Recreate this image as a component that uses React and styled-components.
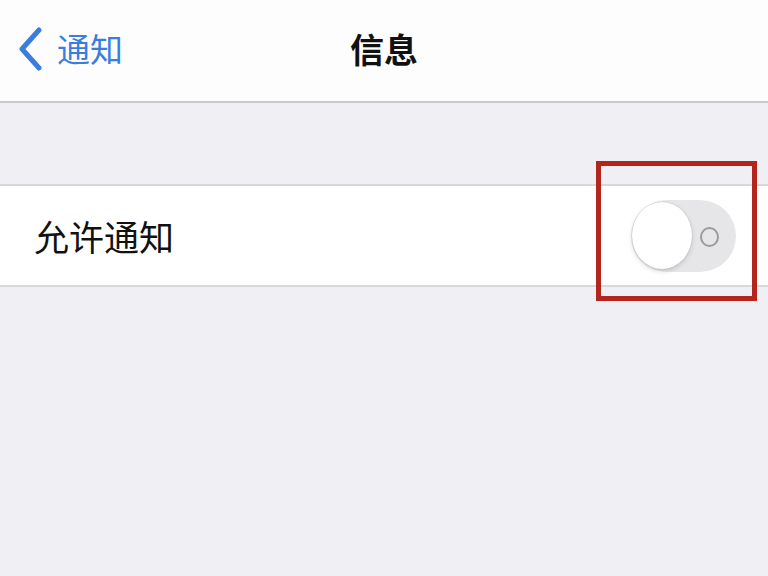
import React from "react";
import styled, { createGlobalStyle } from "styled-components";

const Global = createGlobalStyle`
  html, body { margin: 0; padding: 0; background: #efeff4; }
  body { font-family: "PingFang SC", "Noto Sans CJK SC", "Noto Sans", sans-serif; }
  #root { min-height: 576px; }
`;

const Page = styled.div`
  width: 768px;
  height: 576px;
  background: #efeff4;
  display: flex;
  flex-direction: column;
  overflow: hidden;
`;

const NavBar = styled.header`
  height: 103px;
  background: #fdfdfe;
  border-bottom: 2px solid #c9c9cc;
  display: grid;
  grid-template-columns: 1fr auto 1fr;
  align-items: center;
  box-sizing: border-box;
  flex: none;
`;

const Back = styled.div`
  display: flex;
  align-items: center;
  gap: 14px;
  padding-left: 17px;
  color: #3b7ddd;
  font-size: 33px;
  line-height: 1;
  padding-bottom: 4px;
`;

const Title = styled.h1`
  margin: 0;
  font-size: 34px;
  font-weight: 700;
  color: #111;
  line-height: 1;
  padding-bottom: 4px;
`;

const Spacer = styled.div`
  height: 81px;
  flex: none;
`;

const Group = styled.section`
  background: #fff;
  border-top: 2px solid #d8d8dc;
  border-bottom: 2px solid #d8d8dc;
`;

const Row = styled.div`
  height: 99px;
  display: flex;
  align-items: center;
  justify-content: space-between;
  padding: 0 32px 0 34px;
`;

const Label = styled.span`
  font-size: 35px;
  color: #111;
  line-height: 1;
`;

const Highlight = styled.div`
  position: relative;
  display: flex;
  align-items: center;
  justify-content: center;
`;

const Frame = styled.div`
  position: absolute;
  left: -35px;
  top: -39px;
  width: 151px;
  height: 130px;
  border: 5px solid #b3261e;
  pointer-events: none;
`;

const Track = styled.div`
  position: relative;
  width: 105px;
  height: 72px;
  border-radius: 36px;
  background: #e6e6e9;
  display: flex;
  align-items: center;
`;

const Knob = styled.div`
  margin-left: 1px;
  width: 60px;
  height: 67px;
  border-radius: 50%;
  background: #fff;
  box-shadow: 0 2px 5px rgba(0, 0, 0, 0.16), 0 0 1px rgba(0, 0, 0, 0.2);
`;

const Ring = styled.div`
  position: absolute;
  left: 69px;
  top: 27px;
  width: 15px;
  height: 16px;
  border-radius: 50%;
  border: 2px solid #9b9b9e;
`;

function Chevron() {
  return (
    <svg width="26" height="44" viewBox="0 0 26 44">
      <path d="M22 3 L5 22 L22 41" fill="none" stroke="#3b7ddd" strokeWidth="5" strokeLinecap="round" strokeLinejoin="round" />
    </svg>
  );
}

export default function App() {
  return (
    <Page>
      <Global />
      <NavBar>
        <Back>
          <Chevron />
          <span>通知</span>
        </Back>
        <Title>信息</Title>
        <div />
      </NavBar>
      <Spacer />
      <Group>
        <Row>
          <Label>允许通知</Label>
          <Highlight>
            <Track>
              <Knob />
              <Ring />
            </Track>
            <Frame />
          </Highlight>
        </Row>
      </Group>
    </Page>
  );
}
